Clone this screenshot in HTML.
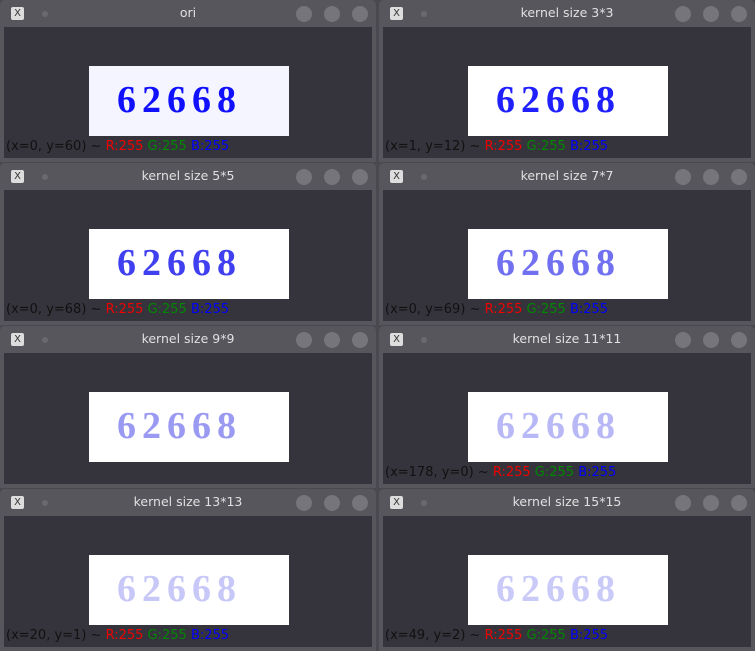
<!DOCTYPE html><html><head><style>
body{margin:0;width:755px;height:649px;background:#4a4950;position:relative;overflow:hidden;font-family:"DejaVu Sans","Liberation Sans",sans-serif}
.w{position:absolute;width:376px;height:162px;background:#57565d;border-radius:5px 5px 0 0}
.t{position:absolute;left:0;top:0;right:0;height:27px;color:#e0e0e0;font-size:12.5px;text-align:center;line-height:26px}
.ic{position:absolute;left:11px;top:7px;width:13px;height:13px;background:#ddd;border-radius:2px;font-size:10px;line-height:13px;color:#333;text-align:center}
.dot{position:absolute;left:42px;top:11px;width:6px;height:6px;border-radius:3px;background:#6a696f}
.b{position:absolute;top:6px;width:16px;height:16px;border-radius:8px;background:#76757b}
.c{position:absolute;left:4px;top:27px;right:4px;height:131px;background:#35343c}
.im{position:absolute;left:85px;top:39px;width:200px;height:70px;background:#fff;overflow:hidden}
.im span{position:absolute;left:28px;top:12px;font-family:"Liberation Serif",serif;font-weight:bold;font-size:38px;letter-spacing:6px;color:#1010ff}
.s{position:absolute;left:2px;top:112px;font-size:13px;color:#111;white-space:nowrap}
.r{color:#e00}.g{color:#080}.bl{color:#00f}
</style></head><body>
<div class="w" style="left:0;top:0"><div class="t"><div class="ic">X</div><div class="dot"></div>ori<div class="b" style="left:296px"></div><div class="b" style="left:324px"></div><div class="b" style="left:352px"></div></div><div class="c"><div class="im" style="background:#f4f5ff"><span>62668</span></div><div class="s">(x=0, y=60) ~ <span class="r">R:255</span> <span class="g">G:255</span> <span class="bl">B:255</span></div></div></div>
<div class="w" style="left:379px;top:0"><div class="t"><div class="ic">X</div><div class="dot"></div>kernel size 3*3<div class="b" style="left:296px"></div><div class="b" style="left:324px"></div><div class="b" style="left:352px"></div></div><div class="c"><div class="im"><span style="color:#2020ff">62668</span></div><div class="s">(x=1, y=12) ~ <span class="r">R:255</span> <span class="g">G:255</span> <span class="bl">B:255</span></div></div></div>
<div class="w" style="left:0;top:163px"><div class="t"><div class="ic">X</div><div class="dot"></div>kernel size 5*5<div class="b" style="left:296px"></div><div class="b" style="left:324px"></div><div class="b" style="left:352px"></div></div><div class="c"><div class="im"><span style="color:#4040f0">62668</span></div><div class="s">(x=0, y=68) ~ <span class="r">R:255</span> <span class="g">G:255</span> <span class="bl">B:255</span></div></div></div>
<div class="w" style="left:379px;top:163px"><div class="t"><div class="ic">X</div><div class="dot"></div>kernel size 7*7<div class="b" style="left:296px"></div><div class="b" style="left:324px"></div><div class="b" style="left:352px"></div></div><div class="c"><div class="im"><span style="color:#7070f0">62668</span></div><div class="s">(x=0, y=69) ~ <span class="r">R:255</span> <span class="g">G:255</span> <span class="bl">B:255</span></div></div></div>
<div class="w" style="left:0;top:326px"><div class="t"><div class="ic">X</div><div class="dot"></div>kernel size 9*9<div class="b" style="left:296px"></div><div class="b" style="left:324px"></div><div class="b" style="left:352px"></div></div><div class="c"><div class="im"><span style="color:#9a9af2">62668</span></div></div></div>
<div class="w" style="left:379px;top:326px"><div class="t"><div class="ic">X</div><div class="dot"></div>kernel size 11*11<div class="b" style="left:296px"></div><div class="b" style="left:324px"></div><div class="b" style="left:352px"></div></div><div class="c"><div class="im"><span style="color:#b8b8f6">62668</span></div><div class="s">(x=178, y=0) ~ <span class="r">R:255</span> <span class="g">G:255</span> <span class="bl">B:255</span></div></div></div>
<div class="w" style="left:0;top:489px"><div class="t"><div class="ic">X</div><div class="dot"></div>kernel size 13*13<div class="b" style="left:296px"></div><div class="b" style="left:324px"></div><div class="b" style="left:352px"></div></div><div class="c"><div class="im"><span style="color:#c8c8f8">62668</span></div><div class="s">(x=20, y=1) ~ <span class="r">R:255</span> <span class="g">G:255</span> <span class="bl">B:255</span></div></div></div>
<div class="w" style="left:379px;top:489px"><div class="t"><div class="ic">X</div><div class="dot"></div>kernel size 15*15<div class="b" style="left:296px"></div><div class="b" style="left:324px"></div><div class="b" style="left:352px"></div></div><div class="c"><div class="im"><span style="color:#cacaf8">62668</span></div><div class="s">(x=49, y=2) ~ <span class="r">R:255</span> <span class="g">G:255</span> <span class="bl">B:255</span></div></div></div>
</body></html>
